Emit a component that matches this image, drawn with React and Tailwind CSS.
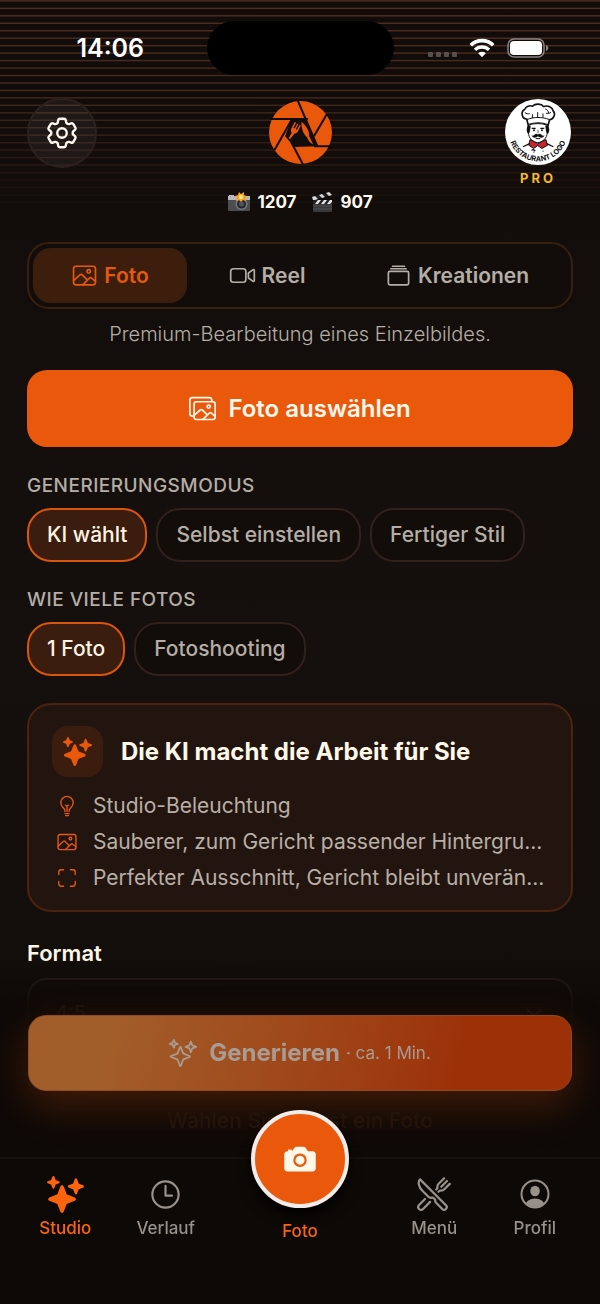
import React, { useState } from "react";
import clsx from "clsx";
import { HiOutlineCog6Tooth } from "react-icons/hi2";
import {
  IoAlbumsOutline,
  IoBulbOutline,
  IoCamera,
  IoChevronDown,
  IoImageOutline,
  IoImagesOutline,
  IoRestaurantOutline,
  IoScanOutline,
  IoSparkles,
  IoSparklesOutline,
  IoTimeOutline,
  IoVideocamOutline,
} from "react-icons/io5";

const tabs = [
  { id: "foto", label: "Foto", icon: IoImageOutline, width: "w-[154px]" },
  { id: "reel", label: "Reel", icon: IoVideocamOutline, width: "w-[160px]" },
  { id: "kreationen", label: "Kreationen", icon: IoAlbumsOutline, width: "flex-1" },
];

const modes = ["KI wählt", "Selbst einstellen", "Fertiger Stil"];
const counts = ["1 Foto", "Fotoshooting"];

const benefits = [
  { icon: IoBulbOutline, text: "Studio-Beleuchtung" },
  { icon: IoImageOutline, text: "Sauberer, zum Gericht passender Hintergru..." },
  { icon: IoScanOutline, text: "Perfekter Ausschnitt, Gericht bleibt unverän..." },
];

// Fading scan lines behind the header
const ScanLines = () => (
  <svg
    className="absolute inset-x-0 top-0 h-[224px] w-full"
    viewBox="0 0 600 224"
    preserveAspectRatio="none"
    aria-hidden="true"
  >
    {Array.from({ length: 29 }, (_, i) => (
      <rect
        key={i}
        x="0"
        y={i * 7.46 + 0.2}
        width="600"
        height="1.4"
        fill="#7d4632"
        opacity={i < 13 ? 0.6 - i * 0.009 : Math.max(0.48 - (i - 13) * 0.03, 0)}
      />
    ))}
  </svg>
);

const WifiIcon = () => (
  <svg width="26" height="20" viewBox="0 0 26 20" fill="none" stroke="#fff" aria-hidden="true">
    <path d="M1.8 7.2a16 16 0 0 1 22.4 0" strokeWidth="3.6" />
    <path d="M6 11.8a10 10 0 0 1 14 0" strokeWidth="3.4" />
    <path d="M13 19.2l-3.8-3.9a5.6 5.6 0 0 1 7.6 0z" fill="#fff" stroke="none" />
  </svg>
);

const BatteryIcon = () => (
  <svg width="42" height="20" viewBox="0 0 42 20" aria-hidden="true">
    <rect x="1" y="1" width="36" height="18" rx="6" fill="none" stroke="#8b8380" strokeWidth="1.5" />
    <rect x="3" y="3" width="32" height="14" rx="4" fill="#fff" />
    <path d="M39 7c3 1 3 5 0 6z" fill="#8b8380" />
  </svg>
);

const ApertureLogo = () => (
  <svg width="63" height="63" viewBox="146 33 188 188" role="img" aria-label="Logo">
    <circle cx="240" cy="127" r="94" fill="#ea580c" />
    <g stroke="#120d0a" strokeWidth="6" fill="none">
      <path d="M232 32L290 168" />
      <path d="M152 87H262" />
      <path d="M214 88L162 180" />
      <path d="M200 132L247 222" />
      <path d="M280 168H332" />
      <path d="M319 72L280 138" />
    </g>
    <path d="M212 89H256L292 168L222 170L194 138Z" fill="#120d0a" />
    <path
      d="M223 96l-9 16c-4 8-3 13 0 16l-10 17 6 1 12-16c6 0 9-3 12-10l7-15-3-1-9 15-3-2 8-16-3-1-9 15-3-2 8-16z"
      fill="#ea580c"
    />
    <path d="M243 96c14 10 24 28 23 42l12 25c-9-4-15-12-18-21-12-9-18-29-17-46z" fill="#ea580c" />
  </svg>
);

const ChefLogo = () => (
  <svg width="66" height="66" viewBox="43 26 200 200" role="img" aria-label="Restaurant Logo">
    <circle cx="143" cy="126" r="100" fill="#fff" />
    <path
      d="M113 104l-4-17c-15-1-20-22-6-30 3-8 15-13 23-9 9-9 28-8 34 1 13-5 27 2 29 13 9 10 1 26-11 27l-4 16c-18-7-42-7-61-1z"
      fill="#fff"
      stroke="#111"
      strokeWidth="5"
      strokeLinejoin="round"
    />
    <path d="M110 88c22-8 44-8 67 0M126 72v12M142 66v16M158 70v13M103 67c5 4 10 5 15 3M182 66c-4 4-9 5-15 3M165 56c6 2 10 7 10 13" fill="none" stroke="#111" strokeWidth="3" />
    <path d="M114 105v22c0 18 14 31 28 31s29-13 29-31v-22c-18-6-40-6-57 0z" fill="#fff" stroke="#111" strokeWidth="3" />
    <path d="M112 105l9 2-3 20-5 5c-6-7-5-16-1-27zM174 105l-9 2 3 20 5 5c6-7 5-16 1-27z" fill="#111" />
    <path d="M124 115h12M150 115h12" stroke="#111" strokeWidth="4" />
    <circle cx="131" cy="121" r="3" fill="#111" />
    <circle cx="155" cy="121" r="3" fill="#111" />
    <path d="M143 119v11" stroke="#111" strokeWidth="2" />
    <path d="M143 134c-4-5-10-1-12 2-2 2-6 2-8 0 3 9 15 9 20 3 5 6 17 6 20-3-2 2-6 2-8 0-2-3-8-7-12-2z" fill="#111" />
    <path d="M136 146h14" stroke="#111" strokeWidth="3" />
    <path d="M119 149l9 4 14 9 16-9 9-4 5 17-17 10-13-9-12 9-15-10z" fill="#c3262d" stroke="#111" strokeWidth="3" />
    <path d="M116 162l-17 8M171 162l17 8" stroke="#111" strokeWidth="4" strokeLinecap="round" />
    <path d="M123 181c5-4 10-2 12 2M129 187l4-1M157 184h3" stroke="#111" strokeWidth="3" />
    <path id="chef-arc" d="M54 126A89 89 0 0 0 232 126" fill="none" />
    <text fontSize="22" fontWeight="700" fill="#111" fontFamily="Inter, sans-serif" textAnchor="middle">
      <textPath href="#chef-arc" startOffset="50%">
        RESTAURANT LOGO
      </textPath>
    </text>
  </svg>
);

const FlashCamera = () => (
  <svg width="24" height="20" viewBox="0 0 24 20" aria-hidden="true">
    <rect x="1" y="5" width="22" height="14" rx="1" fill="#4d4d50" />
    <path d="M1 8V4h1V3h5v1h16v4z" fill="#b9b9bb" />
    <circle cx="14.500" cy="12" r="6" fill="#77787c" />
    <circle cx="14.500" cy="12" r="4.500" fill="#25272d" />
    <circle cx="14.500" cy="12" r="2.500" fill="#4d5563" />
    <path d="M12 0l2 2 3-2v3l3 1-2 2 1 3-3-1-2 2-2-2-3 1 1-3-2-2 3-1z" fill="#f6a21b" />
    <circle cx="14" cy="5" r="2.200" fill="#ffe28a" />
  </svg>
);

const Clapper = () => (
  <svg width="22" height="20" viewBox="0 0 22 20" aria-hidden="true">
    <rect x="2" y="9" width="19" height="11" rx="1" fill="#38383a" />
    <path d="M2 14h19M2 17h19" stroke="#505052" strokeWidth="1" />
    <rect x="2" y="8" width="19" height="4" fill="#202022" />
    <path d="M4 12l3-4h3l-3 4zM10 12l3-4h3l-3 4zM16 12l3-4h2v2l-2 2z" fill="#e6e6e6" />
    <path d="M1 5L20 0l1 3L2 8z" fill="#202022" />
    <path d="M1 5l3-1 3 3-3 1H2zM8 3l3-1 3 3-3 1zM15 1l3-1 3 3-3 1z" fill="#d8d8d8" />
  </svg>
);

const ProfileIcon = () => (
  <svg width="30" height="30" viewBox="0 0 30 30" aria-hidden="true">
    <defs>
      <clipPath id="profile-clip">
        <circle cx="15" cy="15" r="13" />
      </clipPath>
    </defs>
    <circle cx="15" cy="15" r="13.500" fill="none" stroke="currentColor" strokeWidth="2" />
    <ellipse cx="15" cy="12" rx="4.800" ry="5.300" fill="currentColor" />
    <ellipse cx="15" cy="27" rx="10" ry="7.500" fill="currentColor" clipPath="url(#profile-clip)" />
  </svg>
);

const StatusBar = () => (
  <div className="grid grid-cols-[1fr_187px_1fr] items-center pt-[21px]">
    <span className="pl-[14px] text-center text-[25px] font-semibold leading-8 text-white">14:06</span>
    <div className="h-[54px] rounded-full bg-black" />
    <div className="flex items-center justify-center gap-3 pr-4">
      <div className="flex gap-[3px] pt-3">
        {[0, 1, 2, 3].map((dot) => (
          <span key={dot} className="size-[5px] rounded-[1px] bg-[#56504d]" />
        ))}
      </div>
      <WifiIcon />
      <BatteryIcon />
    </div>
  </div>
);

const Header = () => (
  <header className="px-[27px] pt-[23px]">
    <div className="grid h-[94px] grid-cols-3 items-start">
      <button
        aria-label="Einstellungen"
        className="flex size-[70px] items-center justify-center rounded-full border-2 border-[#2c211d] bg-white/5 text-[#fffaf0]"
      >
        <HiOutlineCog6Tooth size={38} />
      </button>
      <div className="flex justify-center pt-[3px]">
        <ApertureLogo />
      </div>
      <div className="flex w-[70px] flex-col items-center justify-self-end pt-[1px]">
        <ChefLogo />
        <span className="mt-[5px] text-[13px] font-bold leading-4 tracking-[3px] text-[#f5b82e]">PRO</span>
      </div>
    </div>
    <div className="flex items-center justify-center gap-[14px] text-[17px] font-bold leading-5 text-[#fffaf0]">
      <span className="flex items-center gap-[6px]">
        <FlashCamera />
        1207
      </span>
      <span className="flex items-center gap-2">
        <Clapper />
        907
      </span>
    </div>
  </header>
);

const ChipGroup = ({ title, options, value, onChange }) => (
  <section>
    <h2 className="text-[19px] font-medium uppercase leading-6 tracking-wide text-[#b5aea6]">{title}</h2>
    <div className="mt-[10px] flex gap-[9px]">
      {options.map((option) => (
        <button
          key={option}
          onClick={() => onChange(option)}
          className={clsx(
            "h-[54px] whitespace-nowrap rounded-3xl border-2 px-[18px] text-[21px] font-medium leading-6",
            option === value
              ? "border-[#d9560f] bg-[#3a1d0f] text-[#fff3e2]"
              : "border-[#31211b] bg-[#130d0a] text-[#b5aea6]"
          )}
        >
          {option}
        </button>
      ))}
    </div>
  </section>
);

const AiCard = () => (
  <section className="mt-[27px] rounded-3xl border-2 border-[#4b2310] bg-[#22150f] px-[23px] pb-[14px] pt-[21px]">
    <div className="flex items-center gap-[18px]">
      <div className="flex size-[51px] items-center justify-center rounded-2xl bg-[#3b1d10] text-[#ea580c]">
        <IoSparkles size={29} />
      </div>
      <h3 className="whitespace-nowrap text-[24px] font-bold leading-7 text-[#fff8e8]">Die KI macht die Arbeit für Sie</h3>
    </div>
    <ul className="mt-[11px]">
      {benefits.map(({ icon: Icon, text }) => (
        <li key={text} className="flex h-9 items-center gap-[15px]">
          <Icon size={22} className="ml-1 shrink-0 text-[#e2590f]" />
          <span className="whitespace-nowrap text-[21px] leading-6 text-[#b9afa6]">{text}</span>
        </li>
      ))}
    </ul>
  </section>
);

const NavItem = ({ icon, label, active }) => (
  <a
    href="#"
    className={clsx(
      "flex flex-1 flex-col items-center pt-[17px] text-[17px] font-medium leading-7",
      active ? "text-[#fb640d]" : "text-[#989189]"
    )}
  >
    <span className="mb-[2px] flex h-9 items-center">{icon}</span>
    {label}
  </a>
);

// Generate button and tab bar stay above the scrolling content
const Dock = () => (
  <div className="fixed inset-x-0 bottom-0">
    <div className="bg-linear-to-b from-[#0e0907]/0 via-[#0e0907]/90 via-25% to-[#0e0907] px-[28px] pt-[56px]">
      <button className="flex h-[76px] w-full items-center justify-center rounded-[18px] border border-[#8f4a1f] bg-linear-105 from-[#a25e2a] from-15% to-[#9c3007] to-80% text-[#a99c92] shadow-[0_14px_40px_0_#ea580c40]">
        <IoSparklesOutline size={28} className="mr-3 shrink-0" />
        <span className="text-[24px] font-bold leading-7">Generieren</span>
        <span className="ml-[6px] text-[17px] leading-6">· ca. 1 Min.</span>
      </button>
      <p className="h-[66px] pt-[18px] text-center text-[21px] font-medium leading-6 text-[#25140a]">
        Wählen Sie zuerst ein Foto
      </p>
    </div>
    <nav className="flex h-[147px] items-start border-t-2 border-[#17100d] bg-[#0d0906] px-[15px]">
      <NavItem active label="Studio" icon={<IoSparkles size={37} />} />
      <NavItem label="Verlauf" icon={<IoTimeOutline size={35} />} />
      <a
        href="#"
        className="-mt-[49px] flex w-[168px] flex-col items-center gap-[9px] text-[17px] font-medium leading-7 text-[#fb640d]"
      >
        <span className="flex size-[98px] items-center justify-center rounded-full border-4 border-[#f3ecea] bg-[#ea580c] text-[#fff8e8] shadow-lg shadow-black">
          <IoCamera size={36} />
        </span>
        Foto
      </a>
      <NavItem label="Menü" icon={<IoRestaurantOutline size={36} />} />
      <NavItem label="Profil" icon={<ProfileIcon />} />
    </nav>
  </div>
);

export default function App() {
  const [tab, setTab] = useState("foto");
  const [mode, setMode] = useState(modes[0]);
  const [count, setCount] = useState(counts[0]);

  return (
    <div className="relative min-h-screen bg-linear-to-b from-[#110c0a] via-[#15100d] via-50% to-[#100c0a] font-['Inter',sans-serif]">
      <ScanLines />
      <div className="relative">
        <StatusBar />
        <Header />

        <main className="px-[27px] pt-[30px]">
          <div className="flex h-[67px] rounded-[22px] border-2 border-[#36200f] bg-[#120d0a] p-1">
            {tabs.map(({ id, label, icon: Icon, width }) => (
              <button
                key={id}
                onClick={() => setTab(id)}
                className={clsx(
                  "flex items-center justify-center gap-[6px] rounded-[18px] text-[21px] font-semibold leading-6",
                  width,
                  id === tab ? "bg-[#3d1e0c] text-[#e2590f]" : "text-[#b5aea6]"
                )}
              >
                <Icon size={27} />
                {label}
              </button>
            ))}
          </div>
          <p className="mt-[11px] text-center text-[20px] font-light leading-7 text-[#b5aea6]">
            Premium-Bearbeitung eines Einzelbildes.
          </p>

          <button className="mt-[22px] flex h-[77px] w-full items-center justify-center gap-3 rounded-[20px] bg-[#ea580c] text-[24px] font-semibold leading-7 text-[#fff8ec]">
            <IoImagesOutline size={27} />
            Foto auswählen
          </button>

          <div className="mt-[27px] flex flex-col gap-[26px]">
            <ChipGroup title="Generierungsmodus" options={modes} value={mode} onChange={setMode} />
            <ChipGroup title="Wie viele Fotos" options={counts} value={count} onChange={setCount} />
          </div>

          <AiCard />

          <div className="mt-[27px]">
            <label htmlFor="format" className="block text-[22px] font-semibold leading-7 text-[#fff8e8]">
              Format
            </label>
            <div className="relative mt-[11px]">
              <select
                id="format"
                className="h-[70px] w-full appearance-none rounded-[20px] border-2 border-[#2c1f19] bg-[#130d0a] px-[26px] text-[20px] text-[#5a4f48]"
              >
                <option>4:5</option>
              </select>
              <IoChevronDown size={22} className="absolute right-7 top-6 text-[#5a4f48]" />
            </div>
          </div>
        </main>
      </div>
      <Dock />
    </div>
  );
}
